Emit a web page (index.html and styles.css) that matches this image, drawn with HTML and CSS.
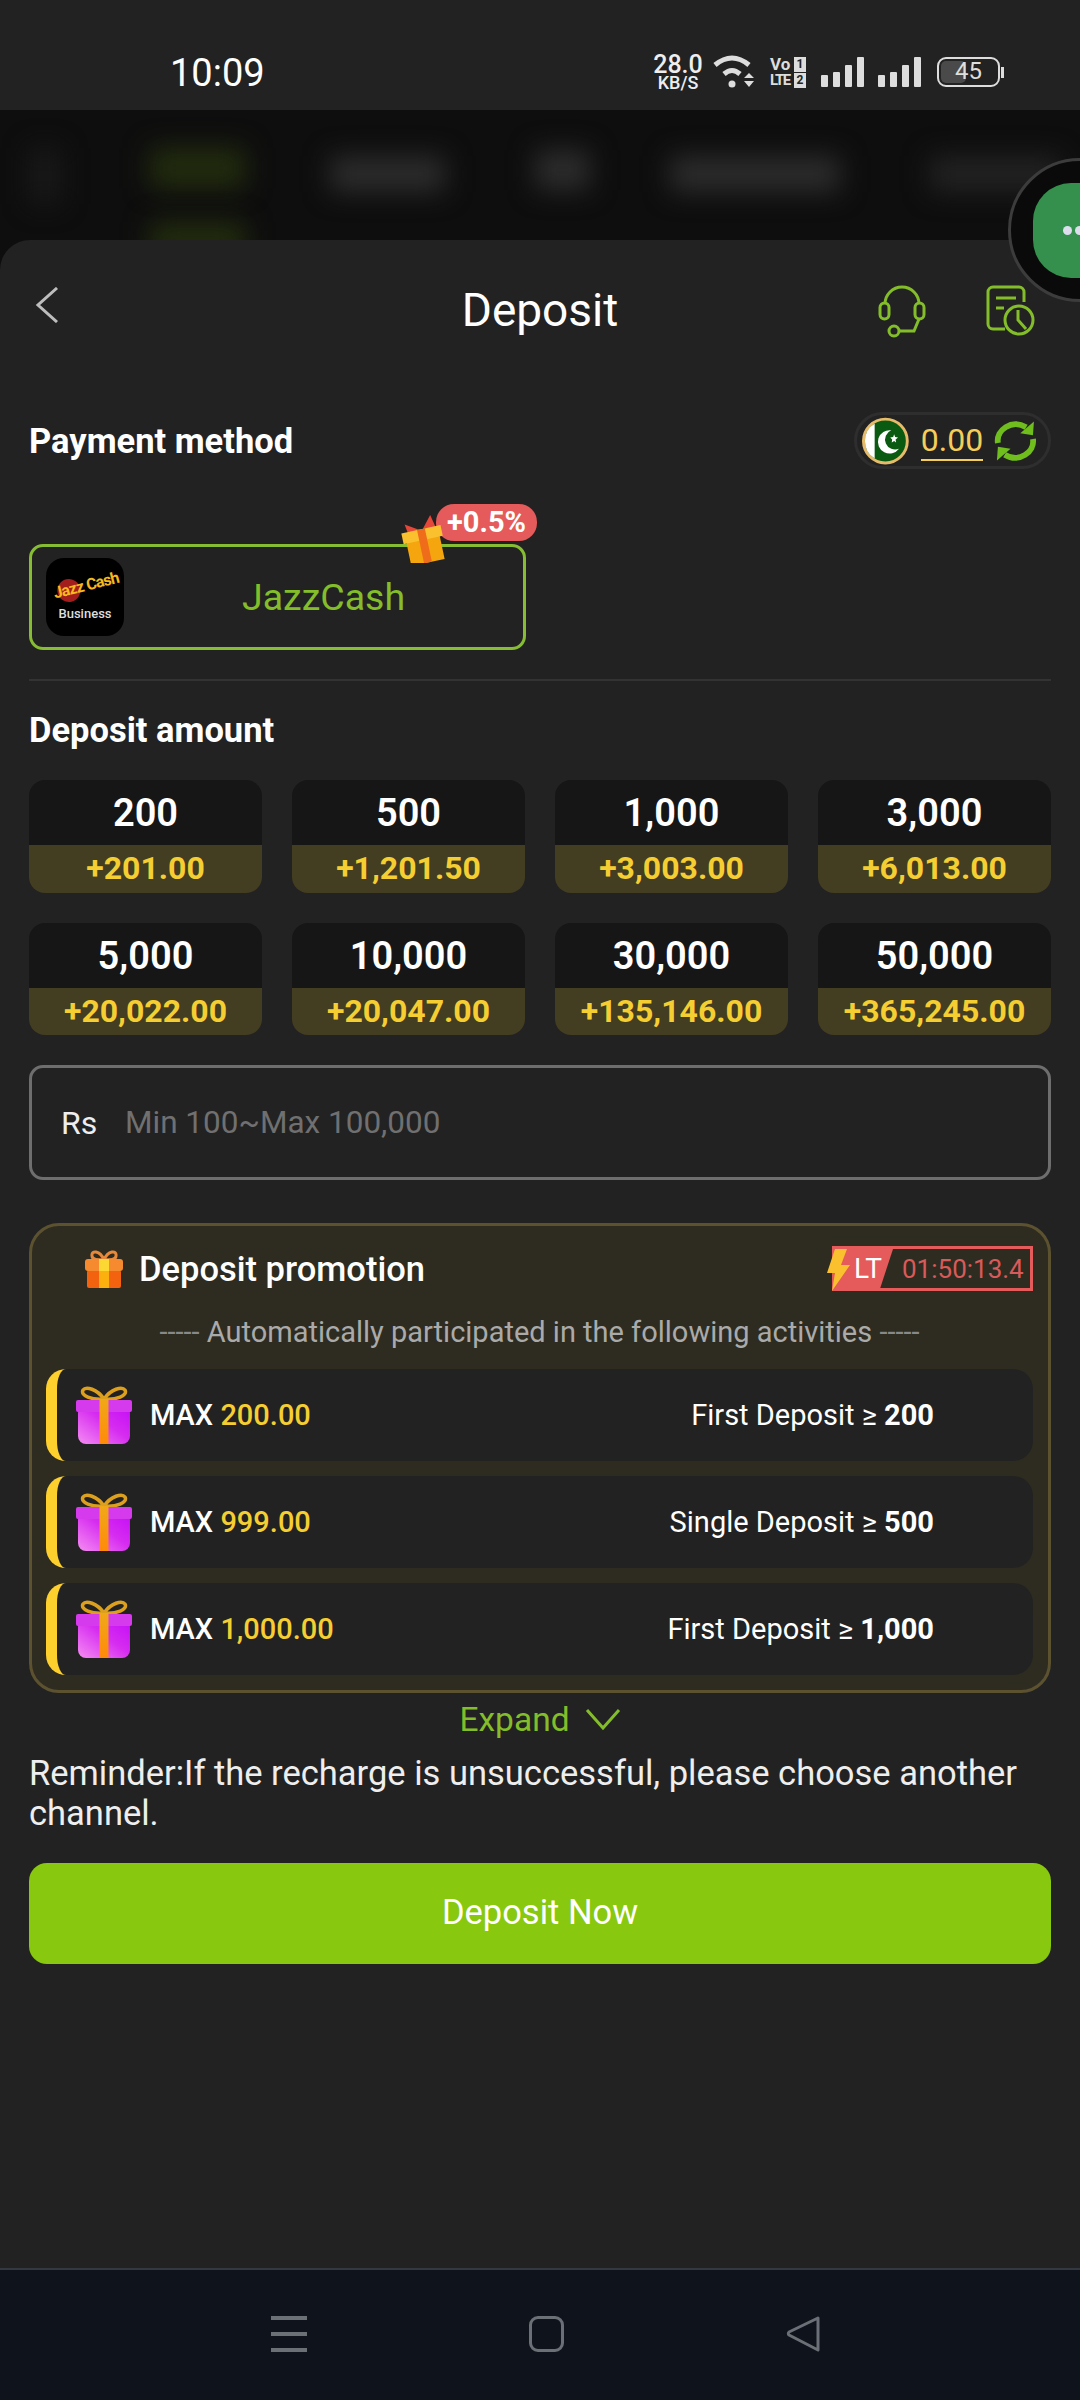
FILE: index.html
```html
<!DOCTYPE html>
<html lang="en">
<head>
    <meta charset="UTF-8">
    <title>Deposit</title>
    <link rel="stylesheet" href="styles.css">
</head>
<body>
    <svg class="defs" width="0" height="0">
        <defs>
            <linearGradient id="purple" x1="0" y1="1" x2="1" y2="0">
                <stop offset="0" stop-color="#f58cf2"/>
                <stop offset="0.55" stop-color="#d62cf0"/>
                <stop offset="1" stop-color="#c40cf8"/>
            </linearGradient>
            <linearGradient id="ribbon" x1="0" y1="0" x2="0" y2="1">
                <stop offset="0" stop-color="#f0a818"/>
                <stop offset="1" stop-color="#ff8a0a"/>
            </linearGradient>
            <symbol id="gift-purple" viewBox="0 0 58 60">
                <path d="M29 14C22 4 11 1 8 5c-3 6 9 10 21 9zM29 14C36 4 47 1 50 5c3 6-9 10-21 9z" fill="none" stroke="#dca01e" stroke-width="3.5"/>
                <rect x="3" y="20" width="52" height="39" rx="8" fill="url(#purple)"/>
                <rect x="1" y="15" width="56" height="12" rx="2" fill="#d53aec"/>
                <rect x="24.500" y="14" width="9" height="45" fill="url(#ribbon)"/>
            </symbol>
        </defs>
    </svg>

    <div class="status">
        <span class="time">10:09</span>
        <div class="status-icons">
            <div class="speed"><b>28.0</b><small>KB/S</small></div>
            <svg class="wifi" width="42" height="36" viewBox="0 0 42 36">
                <path d="M3 11Q20-3 37 11" fill="none" stroke="#ddd" stroke-width="5"/>
                <path d="M12 20Q20 13 28 20" fill="none" stroke="#ddd" stroke-width="5"/>
                <circle cx="20" cy="30" r="3.5" fill="#ddd"/>
                <path d="M32 24h10l-5-5zM32 27h10l-5 6z" fill="#ddd"/>
            </svg>
            <div class="volte">
                <div class="volte-row"><span>Vo</span><i>1</i></div>
                <div class="volte-row lte"><span>LTE</span><i>2</i></div>
            </div>
            <div class="signal"><i class="b1"></i><i class="b2"></i><i class="b3"></i><i class="b4"></i></div>
            <div class="signal"><i class="b1"></i><i class="b2"></i><i class="b3"></i><i class="b4"></i></div>
            <div class="battery"><div class="battery-fill"></div><span>45</span></div>
            <div class="battery-nub"></div>
        </div>
    </div>

    <div class="scrim">
        <i class="blur faint"></i>
        <div class="blur-col"><i class="blur green"></i><i class="blur green"></i></div>
        <i class="blur grey tab1"></i>
        <i class="blur grey tab2"></i>
        <i class="blur grey tab3"></i>
        <i class="blur grey tab4"></i>
    </div>

    <div class="bubble"><div class="bubble-inner"><i></i><i></i></div></div>

    <div class="sheet">
        <div class="header">
            <svg class="back" width="24" height="36" viewBox="0 0 24 36"><path d="M22 1L3 18l19 17" fill="none" stroke="#bdbdbd" stroke-width="3"/></svg>
            <h1>Deposit</h1>
            <div class="header-icons">
                <svg width="48" height="53" viewBox="0 0 48 53" fill="none" stroke="#84bd2a" stroke-width="3">
                    <path d="M7 19a17 17 0 0 1 34 0"/>
                    <rect x="2" y="18" width="9" height="16" rx="4.5"/>
                    <rect x="37" y="18" width="9" height="16" rx="4.5"/>
                    <path d="M41 34l-5 12H21"/>
                    <circle cx="16" cy="46" r="5"/>
                </svg>
                <svg width="50" height="51" viewBox="0 0 50 51" fill="none" stroke="#84bd2a" stroke-width="3">
                    <path d="M19 44H7a5 5 0 0 1-5-5V7a5 5 0 0 1 5-5h26a5 5 0 0 1 5 5v10"/>
                    <path d="M10 13h20M10 23h8"/>
                    <circle cx="33" cy="35" r="14"/>
                    <path d="M32 25v10l8 9"/>
                </svg>
            </div>
        </div>

        <div class="title-row">
            <h2>Payment method</h2>
            <div class="balance">
                <svg width="48" height="48" viewBox="0 0 48 48">
                    <circle cx="24" cy="24" r="22.5" fill="#0b5a12" stroke="#e6bc6a" stroke-width="3"/>
                    <path d="M3 24A21 21 0 0 1 13 6V42A21 21 0 0 1 3 24z" fill="#fff"/>
                    <path d="M30 13a12 12 0 1 0 8 19a10 10 0 1 1-8-19z" fill="#fff"/>
                    <path d="M33 17l1 3 3 .5-2.500 2 .5 3-2-1.500-2.500 1.500.5-3-2-2 3-.5z" fill="#fff"/>
                </svg>
                <span class="balance-num">0.00</span>
                <svg width="44" height="46" viewBox="0 0 44 46" fill="none" stroke="#6fbe1e" stroke-width="6">
                    <path d="M4 25C2 12 18 0 33 9"/>
                    <path d="M40 21c2 13-14 25-29 16"/>
                    <path d="M41 3l-1 14-13-2z" fill="#6fbe1e" stroke="none"/>
                    <path d="M3 43l1-14 13 2z" fill="#6fbe1e" stroke="none"/>
                </svg>
            </div>
        </div>

        <div class="pay-card">
            <div class="logo">
                <div class="logo-mark"><i></i><span>Jazz Cash</span></div>
                <span class="logo-sub">Business</span>
            </div>
            <span class="pay-name">JazzCash</span>
            <span class="pay-badge">+0.5%</span>
            <svg class="pay-gift" width="46" height="48" viewBox="0 0 46 48">
                <g transform="rotate(-12 23 24)">
                    <path d="M21 14L8 6l2 13zM25 14L35 2l3 14z" fill="#e5483a"/>
                    <rect x="6" y="22" width="34" height="26" fill="#f5a50e"/>
                    <rect x="3" y="14" width="40" height="11" fill="#fbc02d"/>
                    <rect x="19" y="14" width="8" height="34" fill="#ef6c1a"/>
                </g>
            </svg>
        </div>

        <div class="divider"></div>

        <h2 class="amount-title">Deposit amount</h2>
        <div class="amounts">
            <div class="amount"><div class="amount-top">200</div><div class="amount-bonus">+201.00</div></div>
            <div class="amount"><div class="amount-top">500</div><div class="amount-bonus">+1,201.50</div></div>
            <div class="amount"><div class="amount-top">1,000</div><div class="amount-bonus">+3,003.00</div></div>
            <div class="amount"><div class="amount-top">3,000</div><div class="amount-bonus">+6,013.00</div></div>
            <div class="amount"><div class="amount-top">5,000</div><div class="amount-bonus">+20,022.00</div></div>
            <div class="amount"><div class="amount-top">10,000</div><div class="amount-bonus">+20,047.00</div></div>
            <div class="amount"><div class="amount-top">30,000</div><div class="amount-bonus">+135,146.00</div></div>
            <div class="amount"><div class="amount-top">50,000</div><div class="amount-bonus">+365,245.00</div></div>
        </div>

        <div class="amount-input">
            <span class="currency">Rs</span>
            <span class="placeholder">Min 100~Max 100,000</span>
        </div>

        <div class="promo">
            <div class="promo-head">
                <svg class="promo-gift" width="38" height="38" viewBox="0 0 38 38">
                    <path d="M19 10C15 0 6 0 7 6c0 4 6 4 12 4zM19 10C23 0 32 0 31 6c0 4-6 4-12 4z" fill="none" stroke="#e8883a" stroke-width="3"/>
                    <rect x="2" y="20" width="34" height="18" rx="2" fill="#f2620f"/>
                    <rect x="0" y="9" width="38" height="12" rx="3" fill="#f58a2e"/>
                    <rect x="14" y="9" width="10" height="12" fill="#fdd835"/>
                    <rect x="14" y="21" width="10" height="17" fill="#fbb010"/>
                </svg>
                <span class="promo-title">Deposit promotion</span>
                <div class="timer">
                    <svg class="bolt" width="24" height="42" viewBox="0 0 24 42"><path d="M14 0H8L0 24h8L5 42 23 16h-9l6-16z" fill="#fbc02d"/></svg>
                    <span class="timer-lt">LT</span>
                    <span class="timer-time">01:50:13.4</span>
                </div>
            </div>
            <p class="promo-note"><span class="dashes">-----</span> Automatically participated in the following activities <span class="dashes">-----</span></p>
            <div class="promo-rows">
                <div class="promo-row">
                    <svg class="row-gift" width="58" height="60"><use href="#gift-purple"/></svg>
                    <span class="row-max">MAX <em>200.00</em></span>
                    <span class="row-rule">First Deposit ≥ <b>200</b></span>
                </div>
                <div class="promo-row">
                    <svg class="row-gift" width="58" height="60"><use href="#gift-purple"/></svg>
                    <span class="row-max">MAX <em>999.00</em></span>
                    <span class="row-rule">Single Deposit ≥ <b>500</b></span>
                </div>
                <div class="promo-row">
                    <svg class="row-gift" width="58" height="60"><use href="#gift-purple"/></svg>
                    <span class="row-max">MAX <em>1,000.00</em></span>
                    <span class="row-rule">First Deposit ≥ <b>1,000</b></span>
                </div>
            </div>
        </div>

        <div class="expand">
            <span>Expand</span>
            <svg width="36" height="24" viewBox="0 0 36 24"><path d="M2 3l16 18L34 3" fill="none" stroke="#84bd2a" stroke-width="3"/></svg>
        </div>

        <p class="reminder">Reminder:If the recharge is unsuccessful, please choose another channel.</p>

        <div class="deposit-btn">Deposit Now</div>
    </div>

    <div class="navbar">
        <div class="nav-menu"><i></i><i></i><i></i></div>
        <div class="nav-home"></div>
        <svg width="35" height="36" viewBox="0 0 35 36"><path d="M32 2L3 16a2 2 0 0 0 0 3l29 15z" fill="none" stroke="#6b6f76" stroke-width="3" stroke-linejoin="round"/></svg>
    </div>
</body>
</html>
```

FILE: styles.css
```css
* { box-sizing: border-box; }
html, body { margin: 0; width: 1080px; height: 2400px; overflow: hidden; }
body { position: relative; background: #222; color: #fff; font-family: Roboto, "Liberation Sans", sans-serif; }
h1, h2, p { margin: 0; }
.defs { position: absolute; }

/* status bar */
.status { height: 110px; padding: 54px 76px 0 170px; display: flex; justify-content: space-between; align-items: flex-start; background: #222; }
.time { margin-top: 1px; font-size: 38px; line-height: 36px; }
.status-icons { display: flex; align-items: flex-start; color: #ddd; }
.speed { width: 52px; margin-right: 8px; display: flex; flex-direction: column; align-items: center; color: #eee; }
.speed b { font-size: 25px; line-height: 22px; font-weight: 500; }
.speed small { font-size: 18px; line-height: 14px; font-weight: 500; }
.wifi { margin-right: 16px; }
.volte { width: 36px; margin: 3px 15px 0 0; display: flex; flex-direction: column; gap: 1px; }
.volte-row { display: flex; justify-content: space-between; font-size: 17px; line-height: 15px; font-weight: 700; }
.volte-row i { width: 12px; font-size: 12px; font-style: normal; text-align: center; background: #ddd; color: #222; }
.lte span { font-size: 15px; letter-spacing: -1.5px; }
.signal { width: 43px; height: 30px; margin: 3px 14px 0 0; display: flex; align-items: flex-end; justify-content: space-between; }
.signal + .signal { margin-right: 16px; }
.signal i { width: 7px; background: #ddd; border-radius: 1px; }
.signal .b1 { height: 12px; }
.signal .b2 { height: 15px; }
.signal .b3 { height: 22px; }
.signal .b4 { height: 30px; }
.battery { position: relative; width: 63px; height: 30px; margin-top: 3px; padding: 2px; border: 2.500px solid #ddd; border-radius: 9px; }
.battery-fill { width: 45%; height: 100%; background: #4a4a4a; border-radius: 5px; }
.battery span { position: absolute; inset: 0; text-align: center; font-size: 24px; line-height: 25px; }
.battery-nub { width: 3px; height: 11px; margin: 13px 0 0 1px; background: #ddd; }

/* blurred page behind the sheet */
.scrim { height: 160px; padding: 38px 0 0 30px; display: flex; align-items: flex-start; background: #0e0e0e; overflow: hidden; }
.blur { display: block; height: 40px; filter: blur(13px); }
.faint { width: 30px; height: 56px; background: #191919; }
.blur-col { width: 95px; margin-left: 90px; display: flex; flex-direction: column; gap: 34px; }
.green { background: #222c0e; }
.grey { background: #2c2c2c; }
.tab1 { width: 115px; margin: 8px 0 0 85px; height: 36px; }
.tab2 { width: 55px; margin: 2px 0 0 90px; }
.tab3 { width: 170px; margin: 8px 0 0 80px; height: 36px; }
.tab4 { width: 130px; margin: 8px 0 0 90px; height: 36px; background: #222; }

/* floating chat bubble */
.bubble { position: absolute; z-index: 3; left: 1008px; top: 158px; width: 144px; height: 144px; padding-left: 22px; display: flex; align-items: center; background: #0a0a0a; border: 3px solid #3c3c3c; border-radius: 50%; }
.bubble-inner { width: 95px; height: 95px; padding-left: 30px; display: flex; align-items: center; gap: 3px; flex-shrink: 0; background: #34904c; border-radius: 38px; }
.bubble-inner i { width: 9px; height: 9px; background: #dde; border-radius: 50%; }

/* sheet */
.sheet { position: relative; height: 2028px; margin-top: -30px; padding: 0 29px; background: #222; border-radius: 30px 30px 0 0; }
.header { position: relative; height: 140px; display: flex; align-items: center; justify-content: center; }
.header h1 { font-size: 46px; font-weight: 400; }
.back { position: absolute; left: 6px; top: 47px; }
.header-icons { position: absolute; right: 15px; top: 45px; display: flex; gap: 60px; }

.title-row { margin-top: 32px; height: 57px; display: flex; align-items: center; justify-content: space-between; }
h2 { font-size: 34.500px; line-height: 40px; font-weight: 700; }
.balance { width: 197px; height: 57px; padding: 0 11px 0 5px; display: flex; align-items: center; border: 3px solid #2e2e2e; border-radius: 29px; }
.balance-num { margin: 0 11px 0 12px; font-size: 32px; line-height: 38px; color: #f5ce5a; border-bottom: 2px solid #f5ce5a; }

.pay-card { position: relative; width: 497px; height: 106px; margin-top: 75px; padding-left: 14px; display: flex; align-items: center; border: 3.500px solid #86bd33; border-radius: 14px; }
.logo { width: 78px; height: 78px; padding-top: 13px; display: flex; flex-direction: column; align-items: center; background: #000; border-radius: 18px; flex-shrink: 0; }
.logo-mark { position: relative; width: 64px; height: 32px; transform: rotate(-14deg); }
.logo-mark i { position: absolute; left: 4px; top: 4px; width: 23px; height: 23px; background: #a31d1d; border-radius: 50%; }
.logo-mark span { position: relative; display: block; font-size: 16px; line-height: 30px; font-weight: 700; color: #f5b81e; white-space: nowrap; letter-spacing: -0.8px; }
.logo-sub { margin-top: 3px; font-size: 13px; line-height: 16px; font-weight: 500; color: #ddd; }
.pay-name { flex: 1; text-align: center; font-size: 37.500px; color: #84bd2a; }
.pay-badge { position: absolute; left: 404px; top: -43px; width: 101px; height: 37px; text-align: center; font-size: 29px; line-height: 36px; font-weight: 700; background: #e55a5a; border-radius: 18px; }
.pay-gift { position: absolute; left: 368px; top: -32px; }

.divider { height: 2px; margin-top: 29px; background: #333; }
.amount-title { margin-top: 29px; }

.amounts { margin-top: 30px; display: grid; grid-template-columns: repeat(4, 1fr); gap: 30px; }
.amount { height: 112.500px; border-radius: 16px; overflow: hidden; text-align: center; font-weight: 700; }
.amount-top { height: 65px; background: #161616; font-size: 38px; line-height: 67px; font-weight: 600; }
.amount-bonus { height: 47.500px; background: #433d22; font-size: 32px; line-height: 46px; color: #f5ce32; }

.amount-input { height: 115px; margin-top: 30px; padding: 0 29px; display: flex; align-items: center; border: 3.500px solid #6e6e6e; border-radius: 14px; }
.currency { width: 64px; font-size: 32px; color: #eee; }
.placeholder { font-size: 31.500px; color: #707070; }

/* promotion box */
.promo { height: 470px; margin-top: 43px; padding: 20px 15px 12px 14px; background: #2e2c20; border: 3px solid #5d5230; border-radius: 30px; }
.promo-head { height: 45px; padding-left: 39px; display: flex; align-items: center; }
.promo-gift { flex-shrink: 0; }
.promo-title { flex: 1; margin-left: 16px; font-size: 34.500px; font-weight: 500; }
.timer { position: relative; width: 201px; height: 45px; display: flex; align-items: center; border: 3px solid #e55a5a; }
.bolt { position: absolute; left: -8px; top: 0; z-index: 1; }
.timer-lt { width: 58px; height: 100%; padding-left: 19px; font-size: 28px; line-height: 40px; background: #e55a5a; clip-path: polygon(0 0, 100% 0, 78% 100%, 0 100%); }
.timer-time { margin-left: 9px; font-size: 26px; color: #d85a5a; }
.promo-note { margin-top: 21px; text-align: center; font-size: 29px; line-height: 40px; color: #aaa; }
.dashes { color: #888; }
.promo-rows { margin-top: 17px; display: flex; flex-direction: column; gap: 15px; }
.promo-row { height: 92px; padding: 0 99px 0 18px; display: flex; align-items: center; background: #222; border-left: 11px solid #fdd02e; border-radius: 20px; font-size: 29px; }
.row-gift { flex-shrink: 0; }
.row-max { flex: 1; margin-left: 17px; font-weight: 500; }
.row-max em { font-style: normal; color: #f5ce32; }
.row-rule b { font-weight: 700; }

.expand { height: 40px; margin-top: 6px; display: flex; align-items: center; justify-content: center; gap: 15px; font-size: 33.500px; color: #84bd2a; }
.reminder { margin-top: 14px; font-size: 34.500px; line-height: 40px; color: #eee; }
.deposit-btn { height: 101px; margin-top: 30px; text-align: center; font-size: 34.500px; line-height: 98px; background: #88c80e; border-radius: 18px; }

/* navigation bar */
.navbar { height: 132px; padding: 46px 259px 0 271px; display: flex; align-items: flex-start; justify-content: space-between; background: #0f131b; border-top: 2px solid #343840; }
.nav-menu { width: 36px; height: 36px; display: flex; flex-direction: column; justify-content: space-between; }
.nav-menu i { height: 4px; background: #6b6f76; }
.nav-home { width: 35px; height: 36px; border: 3px solid #6b6f76; border-radius: 9px; }
```
